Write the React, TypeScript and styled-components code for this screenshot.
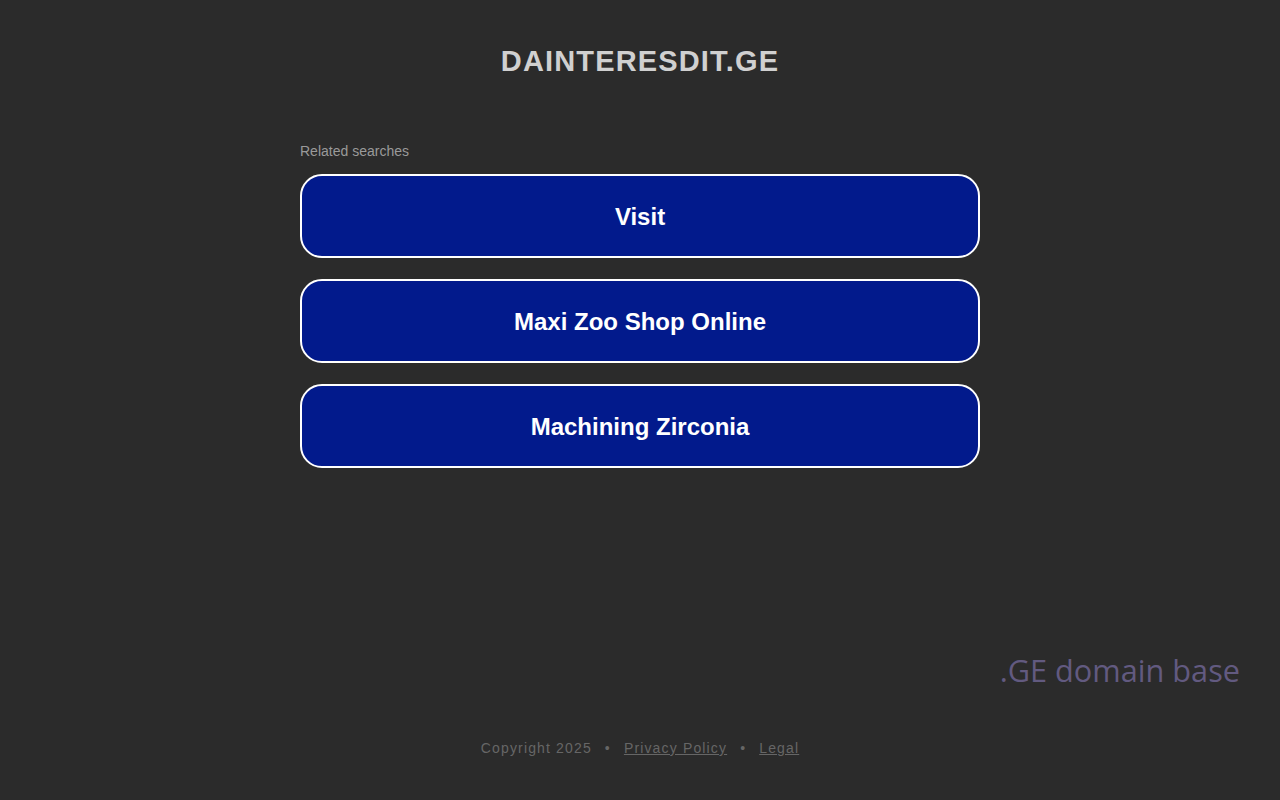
import React from "react";
import styled, { createGlobalStyle } from "styled-components";

const Global = createGlobalStyle`
  html, body { margin: 0; padding: 0; background: #2b2b2b; }
  body { font-family: "Liberation Sans", Arial, sans-serif; }
`;

const Page = styled.div`
  width: 1280px;
  height: 800px;
  display: flex;
  flex-direction: column;
  align-items: center;
  box-sizing: border-box;
  padding-top: 43px;
`;

const Title = styled.h1`
  margin: 0;
  font-size: 29px;
  line-height: 36px;
  font-weight: 700;
  letter-spacing: 1.15px;
  color: #d0d0d0;
`;

const Section = styled.div`
  width: 680px;
  margin-top: 64px;
  display: flex;
  flex-direction: column;
  gap: 21px;
`;

const Label = styled.div`
  font-size: 14px;
  line-height: 16px;
  color: #9a9a9a;
  margin-bottom: -6px;
`;

const SearchButton = styled.a`
  display: flex;
  align-items: center;
  justify-content: center;
  height: 84px;
  box-sizing: border-box;
  border: 2px solid #ffffff;
  border-radius: 22px;
  background: #021a8c;
  color: #ffffff;
  font-size: 24px;
  font-weight: 700;
  text-decoration: none;
  padding-top: 1px;
`;

const Brand = styled.div`
  align-self: flex-end;
  margin-right: 40px;
  margin-top: auto;
  font-family: "Open Sans", sans-serif;
  font-size: 30.7px;
  line-height: 40px;
  color: #625a80;
  position: relative;
  top: -3px;
`;

const Footer = styled.div`
  margin-top: 47px;
  margin-bottom: 44px;
  display: flex;
  gap: 13px;
  font-size: 14px;
  line-height: 16px;
  letter-spacing: 1.15px;
  color: #666666;
`;

const FooterLink = styled.a`
  color: #666666;
  text-decoration: underline;
`;

export default function App() {
  return (
    <>
      <Global />
      <Page>
        <Title>DAINTERESDIT.GE</Title>
        <Section>
          <Label>Related searches</Label>
          <SearchButton href="#">Visit</SearchButton>
          <SearchButton href="#">Maxi Zoo Shop Online</SearchButton>
          <SearchButton href="#">Machining Zirconia</SearchButton>
        </Section>
        <Brand>.GE domain base</Brand>
        <Footer>
          <span>Copyright 2025</span>
          <span>•</span>
          <FooterLink href="#">Privacy Policy</FooterLink>
          <span>•</span>
          <FooterLink href="#">Legal</FooterLink>
        </Footer>
      </Page>
    </>
  );
}
